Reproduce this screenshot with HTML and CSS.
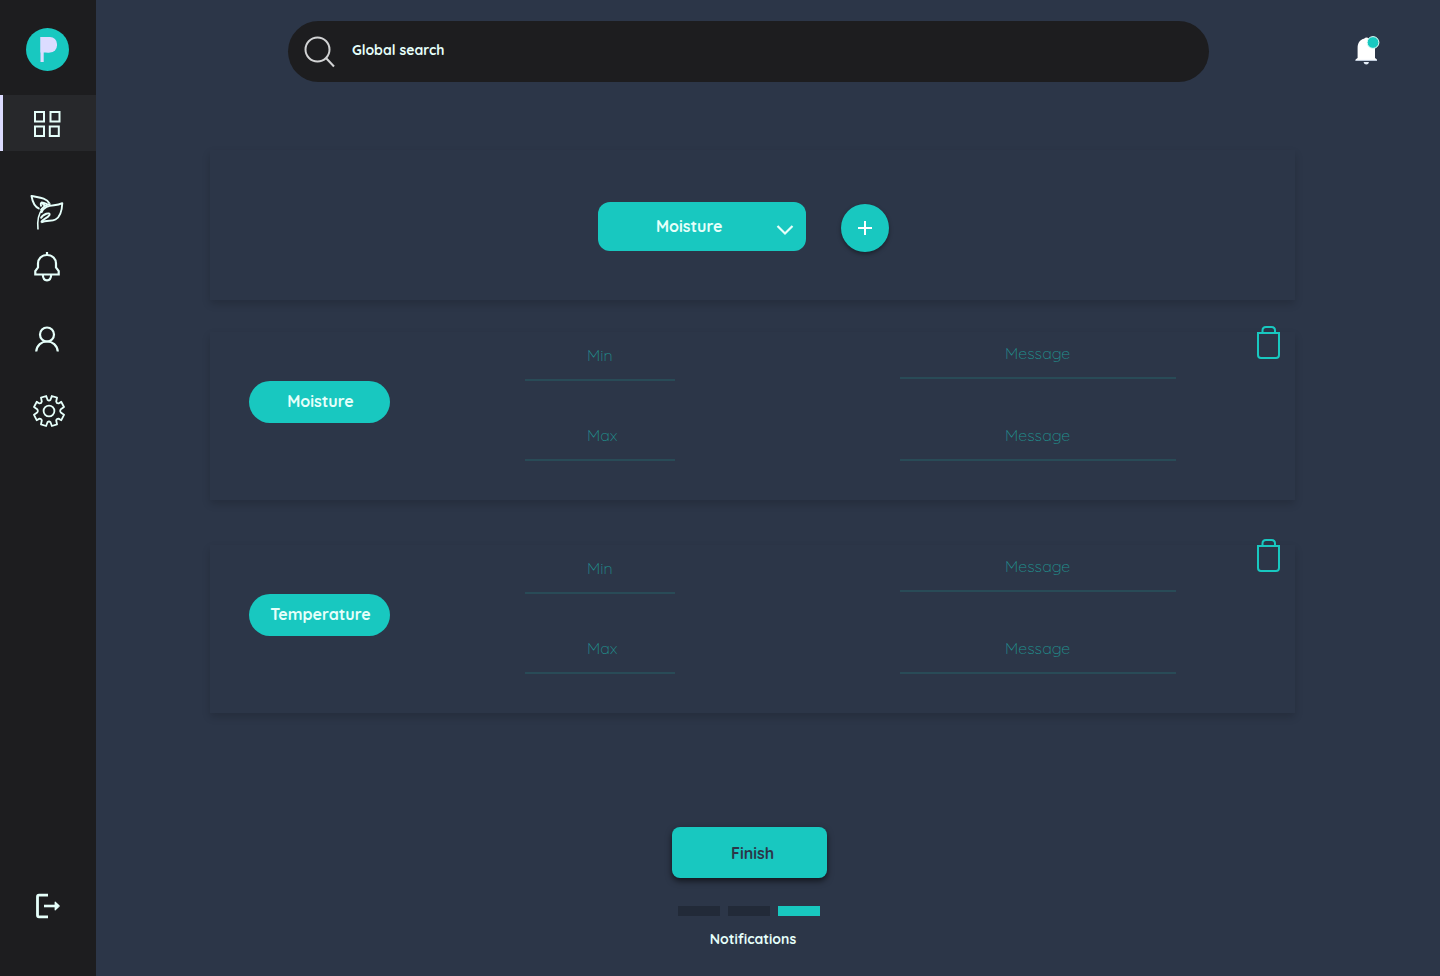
FILE: index.html
```html
<!DOCTYPE html>
<html lang="en">
<head>
<meta charset="utf-8">
<meta name="viewport" content="width=device-width, initial-scale=1">
<title>Notifications</title>
<link rel="stylesheet" href="styles.css">
</head>
<body>
<div class="app">
  <nav class="sidebar" aria-label="Main">
    <a class="logo" href="#" aria-label="Home">
      <svg width="43" height="43" viewBox="0 0 43 43" aria-hidden="true">
        <circle cx="21.500" cy="21.500" r="21.500" fill="#18c8c0"/>
        <g fill="#dcdcff">
          <rect x="14.500" y="9" width="3.200" height="25"/>
          <rect x="14.500" y="9" width="9" height="15.500"/>
          <rect x="15" y="9" width="16" height="15.500" rx="7"/>
        </g>
      </svg>
    </a>
    <a class="nav-link nav-link-active" href="#" aria-label="Dashboard" aria-current="page">
      <svg width="28" height="28" viewBox="0 0 28 28" aria-hidden="true" fill="none" stroke="#e6fffa" stroke-width="2">
        <rect x="2" y="2" width="9" height="9.500"/><rect x="17.500" y="2" width="9" height="9.500"/>
        <rect x="2" y="16.500" width="9" height="9.500"/><rect x="16.800" y="16.500" width="9" height="9.500"/>
      </svg>
    </a>
    <a class="nav-link nav-link-plants" href="#" aria-label="Plants">
      <svg width="34" height="38" viewBox="0 0 34 38" aria-hidden="true" fill="none" stroke="#e6fffa" stroke-width="1.900" stroke-linejoin="round">
        <path d="M9.500 15.800C5.500 14.500 2.500 9 1.500 3C8 4.500 16 4.500 19.500 10.500"/>
        <path d="M20.500 10.800C15.500 12 12.500 14 10.800 17.500"/>
        <path d="M11.500 13.500C10.500 11.500 10.500 10 11.500 9.500C14 9.300 15.500 10.500 17.500 11.500M12 9.800L15 13"/>
        <path d="M11.200 20C13.500 13.500 19 12.800 24 12.300C27 12 30 11.300 32.300 10.200C32 17 30 24 25.500 26.500C21.500 28.800 16.500 26.500 11.200 29.300"/>
        <path d="M11.200 29.300C11.800 26 17.500 25.500 19.500 22C20.800 18.500 12.500 21 10.800 25.500"/>
        <path d="M12.500 16C9 20 7 27 8 36.500" stroke-width="1.600"/>
      </svg>
    </a>
    <a class="nav-link" href="#" aria-label="Alerts">
      <svg width="28" height="32" viewBox="0 0 28 32" aria-hidden="true" fill="none" stroke="#e6fffa" stroke-width="2.200">
        <path d="M14 1V4M14 4C8.500 4 5 7.800 5 12.500V16.500L2.300 20V23.500H25.700V20L23 16.500V12.500C23 7.800 19.500 4 14 4Z"/>
        <path d="M9.800 23.500C10 31.200 18 31.200 18.200 23.500"/>
      </svg>
    </a>
    <a class="nav-link" href="#" aria-label="Profile">
      <svg width="28" height="28" viewBox="0 0 28 28" aria-hidden="true" fill="none" stroke="#e6fffa" stroke-width="2.200">
        <circle cx="14" cy="9.500" r="7"/><path d="M3.200 26.500C3.800 20 8.500 16.500 14 16.500S24.200 20 24.800 26.500"/>
      </svg>
    </a>
    <a class="nav-link nav-link-settings" href="#" aria-label="Settings">
      <svg width="32" height="32" viewBox="0 0 32 32" aria-hidden="true" fill="none" stroke="#e6fffa" stroke-width="1.800" stroke-linejoin="round">
        <circle cx="16" cy="16" r="5.400"/>
        <path d="M13.200 1L14.500 4.800Q16 6.200 17.500 4.800L18.800 1L24 2.700L23.200 6.500Q23.600 8.600 25.600 8.400L28.200 6.800L31 12L27.800 14.300Q26.600 16 27.800 17.500L31 19.800L28.300 25.200L25.500 23.600Q23.500 23.600 23.200 25.500L24 29.300L18.900 31L17.500 27.200Q16 25.700 14.500 27.200L13.100 31L8 29.300L8.800 25.500Q8.500 23.600 6.500 23.600L3.700 25.200L1 19.800L4.200 17.500Q5.400 16 4.200 14.300L1 12L3.800 6.800L6.400 8.400Q8.400 8.600 8.800 6.500L8 2.700Z"/>
      </svg>
    </a>
    <a class="nav-link nav-link-logout" href="#" aria-label="Log out">
      <svg width="26" height="26" viewBox="0 0 26 26" aria-hidden="true" fill="none" stroke="#e6fffa">
        <path d="M13 2.200H4Q2.500 2.200 2.500 3.700V22.300Q2.500 23.800 4 23.800H13" stroke-width="2.800"/>
        <path d="M9 13H21" stroke-width="2.600"/>
        <path d="M20.200 9.200L24.200 13L20.200 16.800Z" fill="#e6fffa" stroke-width="1.200" stroke-linejoin="round"/>
      </svg>
    </a>
  </nav>

  <div class="page">
    <header class="topbar">
      <label class="search">
        <svg class="search-icon" width="32" height="32" viewBox="0 0 32 32" aria-hidden="true" fill="none" stroke="#d2d3d4" stroke-width="2">
          <circle cx="13.500" cy="13.500" r="12"/><path d="M22 22L30 30.500"/>
        </svg>
        <input class="search-input" type="search" placeholder="Global search" aria-label="Global search">
      </label>
      <button class="bell" type="button" aria-label="New notifications">
        <svg width="25" height="30" viewBox="0 0 25 30" aria-hidden="true">
          <path d="M0.500 25.500Q0 24.300 2.600 23V13C2.600 7.500 5.500 4.500 9 3.800Q11.500 1 14 3.800C17.500 4.500 20 7.500 20 13V23Q22.500 24.300 22 25.500Z" fill="#fff"/>
          <path d="M0.500 25.400H22" stroke="#c5d2e2" stroke-width="1"/>
          <path d="M8.500 27H14Q13.500 29.500 11.300 29.500T8.500 27Z" fill="#e4edf8"/>
          <circle cx="18" cy="7.500" r="5.900" fill="#18c8c0" stroke="#e6fffa" stroke-width="1"/>
        </svg>
      </button>
    </header>

    <main class="content">
      <section class="card picker" aria-label="Add a rule">
        <div class="select-wrap">
          <select class="select" aria-label="Measurement">
            <option>Moisture</option>
            <option>Temperature</option>
          </select>
          <svg class="chevron" width="18" height="12" viewBox="0 0 18 12" aria-hidden="true" fill="none" stroke="#e6fffa" stroke-width="2.200">
            <path d="M1.500 2L9 9.500L16.500 2"/>
          </svg>
        </div>
        <button class="add" type="button" aria-label="Add">
          <svg width="14" height="14" viewBox="0 0 14 14" aria-hidden="true" stroke="#fff" stroke-width="2"><path d="M7 0V14M0 7H14"/></svg>
        </button>
      </section>

      <section class="card rule" aria-label="Moisture rule">
        <h2 class="pill">Moisture</h2>
        <div class="limits">
          <input class="field limit" type="text" placeholder="Min" aria-label="Moisture minimum">
          <input class="field limit" type="text" placeholder="Max" aria-label="Moisture maximum">
        </div>
        <div class="messages">
          <input class="field message" type="text" placeholder="Message" aria-label="Message below minimum moisture">
          <input class="field message" type="text" placeholder="Message" aria-label="Message above maximum moisture">
        </div>
        <button class="delete" type="button" aria-label="Delete moisture rule">
          <svg width="25" height="33" viewBox="0 0 25 33" aria-hidden="true" fill="none" stroke="#18c8c0" stroke-width="2">
            <path d="M2 7H23V29Q23 32 20 32H5Q2 32 2 29Z"/><path d="M6.500 7V4.500Q6.500 1 10 1H15.500Q19 1 19 4.500V7"/>
          </svg>
        </button>
      </section>

      <section class="card rule rule-next" aria-label="Temperature rule">
        <h2 class="pill">Temperature</h2>
        <div class="limits">
          <input class="field limit" type="text" placeholder="Min" aria-label="Temperature minimum">
          <input class="field limit" type="text" placeholder="Max" aria-label="Temperature maximum">
        </div>
        <div class="messages">
          <input class="field message" type="text" placeholder="Message" aria-label="Message below minimum temperature">
          <input class="field message" type="text" placeholder="Message" aria-label="Message above maximum temperature">
        </div>
        <button class="delete" type="button" aria-label="Delete temperature rule">
          <svg width="25" height="33" viewBox="0 0 25 33" aria-hidden="true" fill="none" stroke="#18c8c0" stroke-width="2">
            <path d="M2 7H23V29Q23 32 20 32H5Q2 32 2 29Z"/><path d="M6.500 7V4.500Q6.500 1 10 1H15.500Q19 1 19 4.500V7"/>
          </svg>
        </button>
      </section>

      <footer class="progress">
        <button class="finish" type="button">Finish</button>
        <div class="steps" aria-hidden="true">
          <span class="step"></span><span class="step"></span><span class="step step-current"></span>
        </div>
        <p class="caption">Notifications</p>
      </footer>
    </main>
  </div>
</div>
</body>
</html>
```

FILE: styles.css
```css
:root {
  --bg: #2c3648;
  --dark: #1d1d1f;
  --teal: #18c8c0;
  --mint: #e6fffa;
}

* {
  box-sizing: border-box;
}

body {
  margin: 0;
  background: var(--bg);
  color: var(--mint);
  font-family: Quicksand, Lato, sans-serif;
  font-size: 16px;
  line-height: 20px;
}

button,
input,
select {
  font: inherit;
  color: inherit;
  margin: 0;
  padding: 0;
  border: 0;
  background: none;
}

svg {
  display: block;
}

.app {
  display: flex;
  min-height: 100vh;
}

/* Sidebar */
.sidebar {
  display: flex;
  flex: 0 0 96px;
  flex-direction: column;
  padding: 28px 0 42px;
  background: var(--dark);
}

.logo {
  align-self: center;
  margin-bottom: 24px;
  padding-right: 2px;
}

.nav-link {
  display: flex;
  align-items: center;
  justify-content: center;
  height: 56px;
  margin-bottom: 16px;
  padding-right: 2px;
}

.nav-link-active {
  margin-bottom: 33px;
  padding-top: 2px;
  padding-right: 5px;
  border-left: 3px solid #dcdcff;
  background: #27282b;
}

.nav-link-plants {
  height: 55px;
  margin-bottom: 0;
}

.nav-link-settings {
  padding-right: 0;
  padding-left: 2px;
}

.nav-link-logout {
  margin-top: auto;
  margin-bottom: 0;
  padding-right: 0;
}

/* Top bar */
.page {
  flex: 1;
  min-width: 0;
}

.topbar {
  display: flex;
  align-items: center;
  gap: 146px;
  padding: 21px 60px 0 192px;
}

.search {
  display: flex;
  flex: 1;
  align-items: center;
  gap: 16px;
  height: 61px;
  padding: 0 32px 0 16px;
  border-radius: 32px;
  background: var(--dark);
}

.search-icon {
  flex: none;
}

.search-input {
  flex: 1;
  height: 40px;
  padding-bottom: 3px;
  font-size: 14px;
  font-weight: 700;
  outline: 0;
}

.search-input::placeholder {
  color: var(--mint);
  opacity: 1;
}

.bell {
  padding-bottom: 4px;
}

/* Cards */
.content {
  padding: 68px 145px 24px 114px;
}

.card {
  position: relative;
  box-shadow: 0 4px 8px rgba(0, 0, 0, 0.16);
}

.picker {
  display: flex;
  justify-content: center;
  gap: 35px;
  height: 150px;
  padding: 52px 18px 0 0;
}

.select-wrap {
  position: relative;
  width: 208px;
  height: 49px;
}

.select {
  width: 100%;
  height: 100%;
  padding: 0 40px 2px 58px;
  border-radius: 12px;
  background: var(--teal);
  font-weight: 700;
  appearance: none;
}

.select option {
  color: var(--dark);
}

.chevron {
  position: absolute;
  top: 22px;
  right: 12px;
  pointer-events: none;
}

.add {
  display: flex;
  align-items: center;
  justify-content: center;
  width: 48px;
  height: 48px;
  margin-top: 2px;
  border-radius: 50%;
  background: var(--teal);
  box-shadow: 0 2px 4px rgba(0, 0, 0, 0.4);
}

.rule {
  display: grid;
  grid-template-columns: 276fr 375fr 276fr;
  margin-top: 32px;
  padding: 0 119px 39px 39px;
}

.rule-next {
  margin-top: 45px;
}

.pill {
  width: 141px;
  height: 42px;
  margin: 49px 0 0;
  padding-left: 2px;
  border-radius: 21px;
  background: var(--teal);
  font-size: 16px;
  font-weight: 700;
  line-height: 40px;
  text-align: center;
}

.limits,
.messages {
  display: flex;
  flex-direction: column;
}

.limits {
  gap: 33px;
  padding-top: 2px;
}

.messages {
  gap: 35px;
}

.field {
  height: 47px;
  padding-bottom: 4px;
  border-bottom: 2px solid #294b57;
  color: var(--teal);
  font-weight: 300;
  outline: 0;
}

.field::placeholder {
  color: #21918f;
  opacity: 1;
}

.limit {
  width: 40%;
  padding-left: 62px;
}

.message {
  width: 100%;
  padding-left: 105px;
}

.delete {
  position: absolute;
  top: -6px;
  right: 14px;
}

/* Progress */
.progress {
  display: flex;
  flex-direction: column;
  align-items: center;
  margin-top: 114px;
  padding-right: 6px;
}

.finish {
  width: 155px;
  height: 51px;
  padding-left: 6px;
  border-radius: 8px;
  background: var(--teal);
  box-shadow: 0 3px 6px rgba(0, 0, 0, 0.6);
  color: var(--bg);
  font-weight: 700;
}

.steps {
  display: flex;
  gap: 8px;
  margin-top: 28px;
  padding-right: 2px;
}

.step {
  width: 42px;
  height: 10px;
  background: #222a38;
}

.step-current {
  background: var(--teal);
}

.caption {
  margin: 13px 0 0;
  padding-left: 7px;
  font-size: 14px;
  font-weight: 700;
}
```
